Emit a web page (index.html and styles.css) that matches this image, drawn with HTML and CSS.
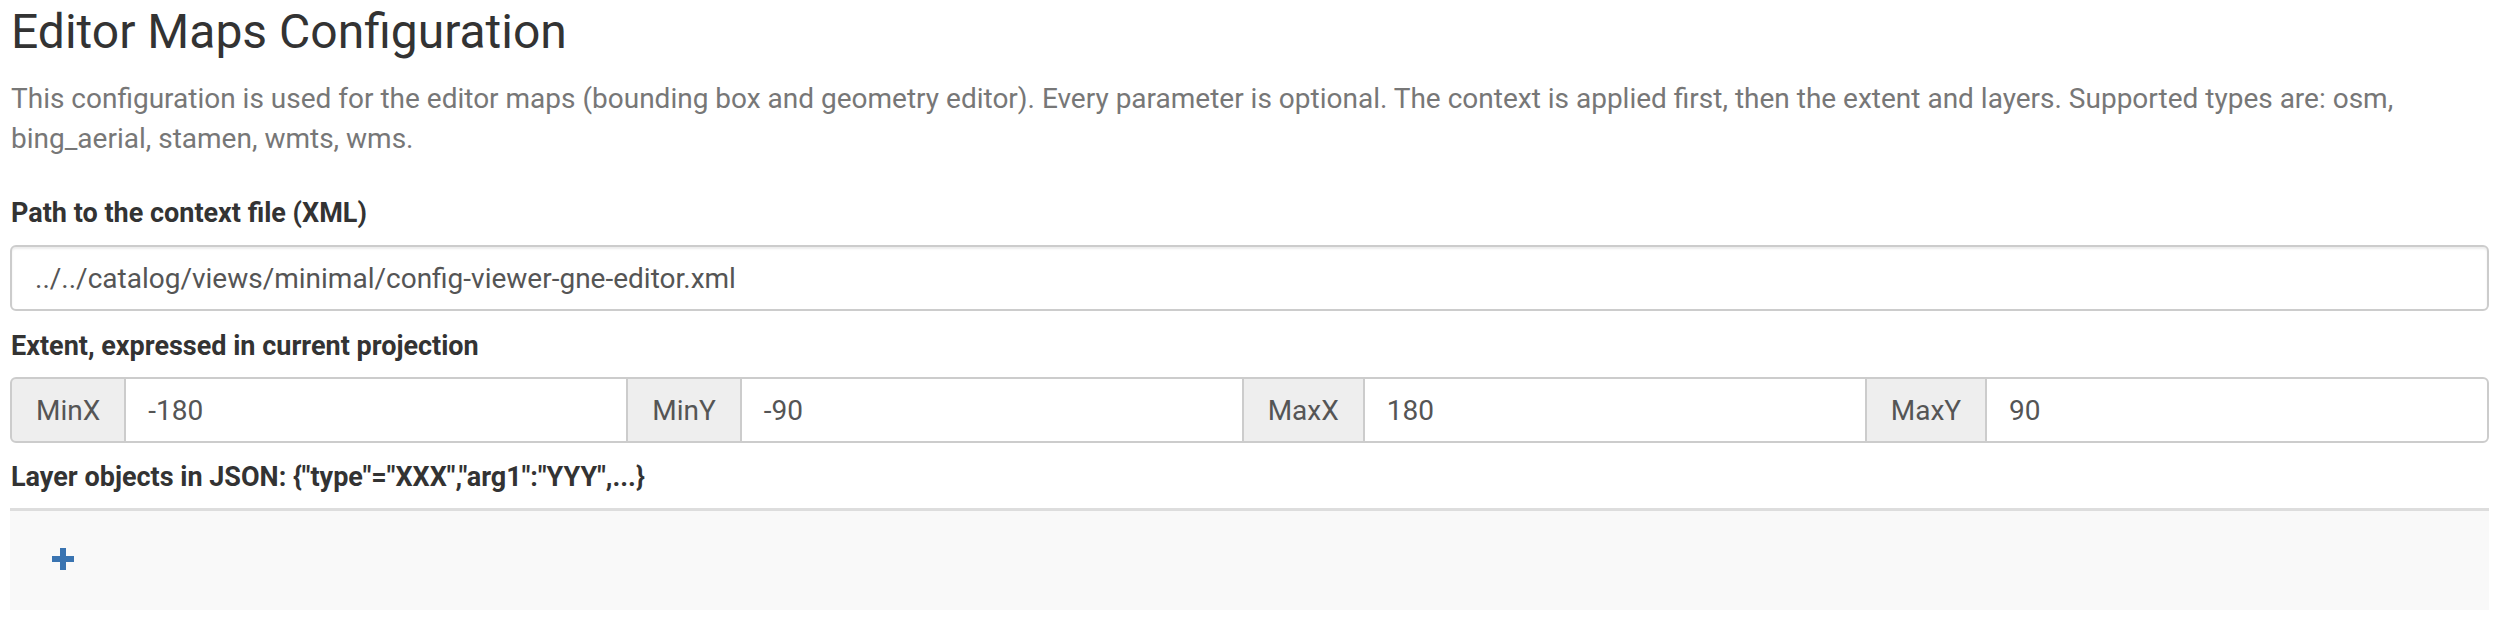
FILE: index.html
```html
<!DOCTYPE html>
<html>
<head>
<meta charset="utf-8">
<link rel="stylesheet" href="styles.css">
</head>
<body>
<div class="page">
  <h1 class="title">Editor Maps Configuration</h1>
  <p class="help">This configuration is used for the editor maps (bounding box and geometry editor). Every parameter is optional. The context is applied first, then the extent and layers. Supported types are: osm, bing_aerial, stamen, wmts, wms.</p>

  <label class="label label-path">Path to the context file (XML)</label>
  <div class="input">../../catalog/views/minimal/config-viewer-gne-editor.xml</div>

  <label class="label label-extent">Extent, expressed in current projection</label>
  <div class="group">
    <span class="addon addon-first">MinX</span>
    <span class="field">-180</span>
    <span class="addon">MinY</span>
    <span class="field">-90</span>
    <span class="addon">MaxX</span>
    <span class="field">180</span>
    <span class="addon">MaxY</span>
    <span class="field field-last">90</span>
  </div>

  <label class="label label-layers">Layer objects in JSON: {"type"="XXX","arg1":"YYY",...}</label>
  <div class="panel">
    <svg class="plus" width="22" height="22" viewBox="0 0 22 22"><path d="M8 0h6v8h8v6h-8v8h-6v-8h-8v-6h8z" fill="#3a74b1"/></svg>
  </div>
</div>
</body>
</html>
```

FILE: styles.css
```css
html, body {
  margin: 0;
  padding: 0;
  background: #fff;
}
.page {
  padding: 0 21px 0 10px;
  font-family: Roboto, "Liberation Sans", sans-serif;
  color: #333;
}
.title {
  margin: 6px 0 0 1px;
  font-size: 48px;
  font-weight: 400;
  line-height: 52px;
  color: #333;
}
.help {
  margin: 21px 0 0 1px;
  font-size: 28px;
  line-height: 40px;
  color: #777;
}
.label {
  display: block;
  margin-left: 1px;
  font-size: 27px;
  font-weight: 700;
  line-height: 36px;
  color: #333;
}
.label-path { margin-top: 36px; }
.label-extent { margin-top: 17px; }
.label-layers { margin-top: 16px; }
.input {
  margin-top: 14px;
  height: 66px;
  box-sizing: border-box;
  border: 2px solid #ccc;
  border-radius: 6px;
  padding: 0 23px;
  display: flex;
  align-items: center;
  font-size: 28px;
  color: #555;
  box-shadow: inset 0 2px 2px rgba(0,0,0,0.075);
}
.group {
  margin-top: 13px;
  display: flex;
  height: 66px;
  box-sizing: border-box;
}
.addon, .field {
  display: flex;
  align-items: center;
  box-sizing: border-box;
  border: 2px solid #ccc;
  font-size: 28px;
  color: #555;
}
.addon {
  background: #eee;
  padding: 0 24px;
  margin-left: -2px;
}
.addon-first {
  margin-left: 0;
  border-radius: 6px 0 0 6px;
}
.field {
  flex: 1;
  margin-left: -2px;
  padding: 0 22px;
  background: #fff;
}
.field-last {
  border-radius: 0 6px 6px 0;
}
.panel {
  margin-top: 13px;
  height: 102px;
  box-sizing: border-box;
  border-top: 3px solid #ddd;
  background: #f9f9f9;
  display: flex;
  align-items: center;
  padding: 0 0 4px 42px;
}
.plus {
  display: block;
}
```
